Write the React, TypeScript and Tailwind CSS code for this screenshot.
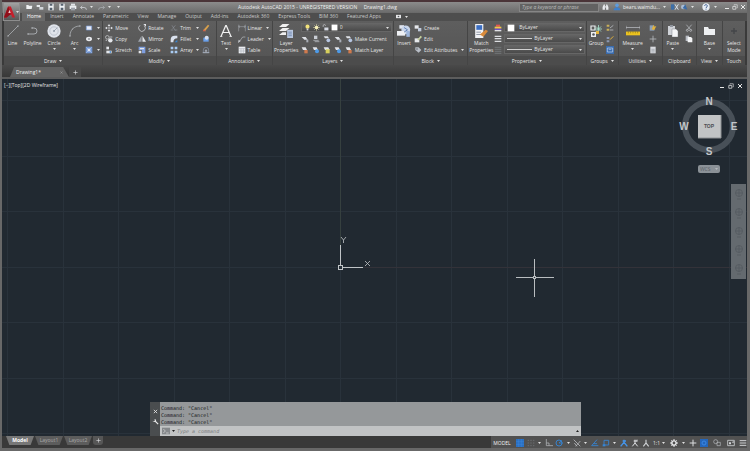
import type { ReactNode } from 'react';
import clsx from 'clsx';

interface IconProps {
  name: string;
  className?: string;
}

const white = '#e4e6ea';
const blue = '#3585d6';
const gold = '#e2b23c';

// All glyphs share a 12x12 box
const glyphs: Record<string, ReactNode> = {
  line: <path d="M1 11 11 1M0 11h2M10 1h2" stroke="#b9bdc2" strokeWidth=".7" />,
  polyline: <path d="M1 9h6a3 3 0 0 0 0-6H5M0 9h2M4 3h2" stroke="#b9bdc2" strokeWidth=".8" />,
  circle: (
    <>
      <circle cx="6" cy="6" r="5.7" fill="#dfe3ea" />
      <circle cx="6" cy="6" r="3.6" stroke="#a8afbb" strokeWidth=".5" />
      <circle cx="6" cy="6" r=".8" fill="#8d96a5" />
      <path d="m6 6 3-3" stroke="#8d96a5" strokeWidth=".6" />
    </>
  ),
  arc: <path d="M1 11C1 5 5 1 11 1M0 11h2M3 4h1M10 1h2" stroke="#b9bdc2" strokeWidth=".7" />,
  rect: <path d="M2 3h8v6H2z" fill="#e6ebf7" stroke="#7fa0dc" />,
  ellipse: (
    <>
      <ellipse cx="6" cy="6" rx="4.5" ry="3.2" fill="#e8eaee" />
      <circle cx="6" cy="6" r="1.2" fill="#5a5f68" />
    </>
  ),
  hatch: (
    <>
      <path d="M1 1h10v10H1z" fill="#6f93cf" />
      <path d="M2 2l8 8M10 2l-8 8" stroke="#c9d7f0" strokeWidth=".8" />
      <path d="M4 4h4v4H4z" fill="#dfe7f6" />
    </>
  ),
  move: (
    <>
      <path d="M6 2v8M2 6h8" stroke={white} strokeWidth=".7" />
      <path d="M6 0l2 3H4zM6 12l2-3H4zM0 6l3-2v4zM12 6 9 4v4z" fill={white} />
    </>
  ),
  rotate: (
    <>
      <path d="M9.5 2.5A5 5 0 1 1 3 2" stroke={white} strokeWidth="1" />
      <path d="M8 0h4v4z" fill={white} />
    </>
  ),
  trim: <path d="M1 9h4M7 9h4M3 2l5 8M8 2 4 7" stroke="#8e949c" strokeWidth=".9" />,
  copy: (
    <>
      <circle cx="3.5" cy="3.5" r="2.7" stroke={white} strokeWidth=".9" />
      <circle cx="8" cy="8" r="3.3" fill={white} />
      <path d="M7 3h4M1 8h2" stroke={white} />
    </>
  ),
  mirror: (
    <>
      <path d="M5.3 1v9H0z" fill="#9ea3ab" />
      <path d="M6.7 1v9H12z" fill={white} />
    </>
  ),
  fillet: (
    <>
      <path d="M1 11V7a6 6 0 0 1 6-6h4v4a6 6 0 0 0-6 6z" fill="#dbe2ee" />
      <path d="M7 11h4V7z" fill={blue} />
    </>
  ),
  stretch: (
    <>
      <path d="M2 1h4v4H2z" fill={white} />
      <path d="M2 7h8v4H2z" fill={white} />
      <path d="M7 8h2v2H7z" fill={blue} />
    </>
  ),
  scale: (
    <>
      <path d="M1 1h10v10H6V6H1z" fill="#7f9fe0" />
      <path d="M1 7h4v4H1zM3 3h6v2H3z" fill={white} />
    </>
  ),
  array: <path d="M1 1h4v4H1zM7 1h4v4H7zM1 7h4v4H1zM7 7h4v4H7z" fill="#a9cbf3" />,
  erase: (
    <>
      <path d="M2 9 9 1l2 1.5L5 10z" fill="#d8a14d" />
      <path d="M1 11h5L3 8z" fill="#d9664a" />
    </>
  ),
  explode: (
    <>
      <path d="M2 4h8v6H2z" fill="#6aa0ea" />
      <circle cx="7" cy="4" r="3" fill="#d6dff0" />
    </>
  ),
  offset: (
    <>
      <path d="M2 10V6a4 4 0 0 1 8 0v4z" stroke="#8794a8" />
      <path d="M1 10h10M5 9V6h2v3" stroke="#c1c9d6" />
    </>
  ),
  textA: (
    <>
      <path d="M1 11.5 5.7.7h.6L11 11.5M3 7.5h6" stroke="#f1f1f1" strokeWidth="1.2" />
      <path d="M0 11.5h2.4M9.4 11.5H12" stroke="#f1f1f1" strokeWidth=".7" />
    </>
  ),
  linear: <path d="M1 1v10M11 1v10M1 4h10M3 2.500 1 4l2 1.500M9 2.500 11 4 9 5.500" stroke="#a9adb3" strokeWidth=".8" />,
  leader: (
    <>
      <path d="M2 10 7 3h4" stroke="#c6c9ce" strokeWidth=".9" />
      <path d="M0 12l1-5 3 2z" fill="#c6c9ce" />
    </>
  ),
  table: (
    <>
      <path d="M1 1h10v10H1z" fill="#eceef2" />
      <path d="M1 4h10M1 7.500h10M4.500 4v7M8 4v7" stroke="#8f959f" strokeWidth=".6" />
    </>
  ),
  layers: (
    <>
      <path d="M3 0h6L6 2.500H0zM3 3.500h6L6 6H0zM3 7h3v2.500H0z" fill="#f0f0f0" />
      <path d="M7 5h5v7H7z" fill="#b8c6de" />
      <path d="M8 7h3M8 8.500h3M8 10h3" stroke="#4f6a97" strokeWidth=".5" />
    </>
  ),
  bulb: (
    <>
      <circle cx="6" cy="4.500" r="3.5" fill="#f2e27a" />
      <path d="M4.500 8h3v3h-3z" fill="#cfd3da" />
    </>
  ),
  sun: (
    <>
      <circle cx="6" cy="6" r="3" fill="#f6f0b8" />
      <path d="M6 0v12M0 6h12M2 2l8 8M10 2l-8 8" stroke="#f6f0b8" strokeWidth=".8" />
    </>
  ),
  lock: (
    <>
      <path d="M2 5V3a2 2 0 0 1 4 0" stroke={white} />
      <path d="M4 6h7v5H4z" fill="#d5d9e2" />
    </>
  ),
  swatch: <path d="M1 1h10v10H1z" fill="#fff" />,
  layA: (
    <>
      <path d="M1 3h6l3 4H5z" fill="#dfe2e7" />
      <path d="M8 7h3v4H8z" fill="#a9aeb7" />
    </>
  ),
  layB: (
    <>
      <path d="M3 1h5v5H3z" fill="#c9cdd4" />
      <path d="M2 8h8M4 10h7" stroke="#c9cdd4" />
    </>
  ),
  layC: (
    <>
      <path d="M1 2h6l2 3H3z" fill="#dfe2e7" />
      <circle cx="8" cy="8" r="2.800" fill="#b7c6e2" />
    </>
  ),
  layOrange: (
    <>
      <path d="M1 2h6l2 4H3z" fill="#e2e4e9" />
      <path d="M5 6h5v5H5z" fill="#cf7a4e" />
    </>
  ),
  layBlue: (
    <>
      <path d="M1 2h6l2 4H3z" fill="#e2e4e9" />
      <circle cx="7.500" cy="8" r="3" fill="#4e9ae6" />
    </>
  ),
  layYellow: (
    <>
      <path d="M1 2h7l2 4H3z" fill="#e2e4e9" />
      <path d="M4 5h6v6H4z" fill="#d6cf5c" />
    </>
  ),
  insert: (
    <>
      <path d="M2 1h4v3H2z" fill="#dfe4ee" />
      <circle cx="7.500" cy="5" r="3.800" fill="#c9d5ea" />
      <path d="M0 6h7v4H0z" fill="#eef0f4" />
      <path d="M8 6h3v5H8z" fill="#9eb6dc" />
      <path d="M6 3l3 2-3 2" stroke="#5f7fb4" strokeWidth=".8" />
    </>
  ),
  create: (
    <>
      <path d="M1 2h6v5H1z" fill="#e6e8ec" />
      <path d="M6 6h5v5H6z" fill="#c1cbdc" />
    </>
  ),
  edit: (
    <>
      <path d="M1 5h7v6H1z" fill="#e6e8ec" />
      <path d="m5 7 5-6 2 2-5 5z" fill="#c8d39c" />
    </>
  ),
  attrib: (
    <>
      <path d="M2 2h5l4 4-4 4-5-4z" fill="#b9bec7" />
      <circle cx="4.500" cy="4.500" r="1" fill="#50545b" />
    </>
  ),
  match: (
    <>
      <path d="M1 0h7v12H1z" fill="#f1f2f5" />
      <path d="M2 1h5v4H2z" fill="#3b6fc4" />
      <path d="M2 7h4M2 9h4" stroke="#7d8797" strokeWidth=".7" />
      <path d="m5 9 5-4 2 1-4 5z" fill="#d98b3b" />
    </>
  ),
  color: (
    <>
      <path d="M3 1h6v3H3z" fill="#e8564f" />
      <path d="M1 4h10v3H1z" fill="#f1c84c" />
      <path d="M1 7h10v2H1z" fill="#7452c8" />
      <path d="M1 9h10v2H1z" fill="#dfe0e4" />
    </>
  ),
  weight: <path d="M1 2h10M1 5.500h10M1 9.500h10" stroke="#dcdee2" strokeWidth="1.800" />,
  ltype: <path d="M1 2h10M1 5h10M1 8h10M1 11h10" stroke="#85898e" strokeWidth=".9" />,
  group: (
    <>
      <path d="M1 1h4v4H1z" stroke="#eceef1" strokeWidth="1.200" />
      <path d="M1 7h5v5H1z" fill="#eceef1" />
      <circle cx="3.500" cy="9.500" r="1.300" fill="#53565a" />
      <path d="M8.500 0v8M4.500 4h8M6 1.500l5 5M11 1.500l-5 5" stroke="#a9e4cf" strokeWidth=".8" />
      <path d="M6 6h3v3H6z" fill={gold} />
    </>
  ),
  ungroup: (
    <>
      <path d="M1 1h4v3H1zM1 7h4v3H1z" fill="#c9b05a" />
      <path d="M6 6l5-4M6 9h5" stroke="#cfd3d9" />
    </>
  ),
  groupEdit: (
    <>
      <path d="M1 3h4v3H1zM1 8h4v3H1z" fill="#8b96b0" />
      <path d="m6 7 5-5" stroke={gold} strokeWidth="1.500" />
    </>
  ),
  groupSel: (
    <>
      <path d="M0 0h12v12H0z" fill="#3a6cae" />
      <path d="M2 3h8v6H2z" stroke="#c4d8f5" />
      <path d="M4 5h4" stroke="#c4d8f5" />
    </>
  ),
  measure: (
    <>
      <path d="M0 3h12M0 1.500v3M12 1.500v3" stroke="#bfc2c7" strokeWidth=".6" />
      <path d="M0 6.500h12v3.200H0z" fill="#ecc31f" />
      <path d="M2 6.500V8M4 6.500V8M6 6.500V8M8 6.500V8M10 6.500V8" stroke="#6b5a12" strokeWidth=".4" />
    </>
  ),
  select: (
    <>
      <path d="M1 2h7v8H1z" fill="#8da1b8" />
      <path d="m4 8 3-7 1 3 3-1-3 6z" fill={gold} />
    </>
  ),
  point: <path d="M6 1v10M1 6h10" stroke="#b9bdc2" strokeWidth="1.200" />,
  calc: (
    <>
      <path d="M2 1h8v10H2z" fill="#d9dbe0" />
      <path d="M3.500 5h5M3.500 7h5M3.500 9h5" stroke="#80858e" strokeWidth=".7" />
    </>
  ),
  paste: (
    <>
      <path d="M1 1h7v9H1z" fill="#cfd2d7" />
      <path d="M3 0h3v2H3z" fill="#8f949c" />
      <path d="M5 4h4l2 2v6H5z" fill="#f4f5f7" stroke="#6a6e75" strokeWidth=".4" />
    </>
  ),
  cut: (
    <>
      <path d="m2 1 6 7M10 1 4 8" stroke="#cfd2d7" strokeWidth=".9" />
      <circle cx="3.500" cy="9.500" r="1.500" stroke="#cfd2d7" />
      <circle cx="8.500" cy="9.500" r="1.500" stroke="#cfd2d7" />
    </>
  ),
  pages: (
    <>
      <path d="M1 1h5v8H1z" fill="#b9bdc4" />
      <path d="M4 3h5l2 2v6H4z" fill="#f4f5f7" />
    </>
  ),
  base: <path d="M1 2h4l1 2h6v6H1z" fill="#eef0f2" />,
  touch: <path d="M6 3v6M3 6h6" stroke="#444649" strokeWidth="1.400" />,
  fileNew: <path d="M2 9V3h3l1 1h5l-1 5z" fill="#f0f1f3" />,
  open: (
    <>
      <path d="M1 3h5v3H1z" fill="#e8eaed" />
      <path d="M5 6h6v4H5z" fill="#d3d6db" />
    </>
  ),
  save: (
    <>
      <path d="M2 1h8v10H2z" fill="#eef0f3" />
      <path d="M4 1h4v3H4zM4 7h4v4H4z" fill="#55606e" />
    </>
  ),
  print: (
    <>
      <path d="M3 1h6v3H3z" fill="#e2e4e8" />
      <path d="M1 4h10v5H1z" fill="#eceef1" />
      <path d="M3 7h6v4H3z" fill="#9da2aa" />
    </>
  ),
  undo: <path d="M4 3 1 6l3 3M1 6h6q4 0 4 4" stroke="#d6d8dc" strokeWidth="1.300" />,
  redo: <path d="m8 3 3 3-3 3M11 6H5q-4 0-4 4" stroke="#b4b7bb" strokeWidth="1.100" />,
  binoculars: (
    <>
      <path d="M1 5 3 1h2v9H1zM11 5 9 1H7v9h4z" fill="#e9ebee" />
      <path d="M5 4h2v2H5z" fill="#e9ebee" />
    </>
  ),
  user: (
    <>
      <circle cx="6" cy="3.500" r="2.700" fill="#5c9be0" />
      <path d="M1 11c0-6 10-6 10 0z" fill="#3f7fcb" />
    </>
  ),
  exchange: (
    <>
      <path d="M0 2h5v8H0z" fill="#3d6ea8" />
      <path d="m6 2 5 8M11 2l-5 8" stroke="#d6e0ee" strokeWidth="1.500" />
    </>
  ),
  cloud: (
    <>
      <circle cx="5" cy="6" r="3.500" fill="#a9bcd6" />
      <path d="m4 8 4-6 3 8z" fill="#3a6aa6" />
    </>
  ),
  help: (
    <>
      <circle cx="6" cy="6" r="5.500" fill="#e8edf5" />
      <path d="M4 4.500c0-3 4-2.500 4 0C8 6 6 6 6 7.500M6 8.500V10" stroke="#2e4f86" strokeWidth="1.300" />
    </>
  ),
  min: <path d="M2 9h8" stroke="#e8e8e8" strokeWidth="2" />,
  restore: (
    <>
      <path d="M1.500 5h6v5.500h-6z" stroke="#e8e8e8" strokeWidth="1.400" />
      <path d="M4 3V1.500h6.500V8H9" stroke="#e8e8e8" strokeWidth="1.200" />
    </>
  ),
  close: <path d="m2 2 8 8M10 2l-8 8" stroke="#e8e8e8" strokeWidth="2" />,
  video: (
    <>
      <path d="M0 2h12v8H0z" fill="#e3e4e6" />
      <circle cx="6" cy="6" r="2" fill="#55585c" />
    </>
  ),
  wrench: (
    <>
      <path d="m5 5 5.500 5.500" stroke="#e8e8e8" strokeWidth="2.200" />
      <path d="M5.500 1.500 4 3l1 1.500L3 6 1 4.500A3 3 0 0 0 6 6a3 3 0 0 0-.5-4.500z" fill="#e8e8e8" />
    </>
  ),
  prompt: (
    <>
      <path d="M0 1h12v10H0z" fill="#85888b" />
      <path d="m2 3 3 3-3 3M6 9h4" stroke="#dcdcdc" />
    </>
  ),
  gridOn: (
    <>
      <path d="M0 0h12v12H0z" fill="#2a70c2" />
      <path d="M0 4h12M0 8h12M4 0v12M8 0v12" stroke="#3f8be0" strokeWidth=".6" />
    </>
  ),
  snap: <path d="M1 2h2M5 2h2M9 2h2M1 6h2M5 6h2M9 6h2M1 10h2M5 10h2M9 10h2" stroke="#6c6f72" strokeWidth="1.500" />,
  ortho: <path d="M2 0v10h10M2 6h4v4" stroke="#b5b8bc" strokeWidth="1.100" />,
  polar: (
    <>
      <circle cx="6" cy="6" r="4.500" stroke={blue} strokeWidth="1.400" />
      <path d="M6 6h6M6 6l4-4" stroke={blue} strokeWidth="1.200" />
    </>
  ),
  iso: <path d="M1 1l10 10M4 11l7-8M2 6l4 5" stroke="#c3c6ca" strokeWidth="1.100" />,
  track: <path d="M1 10 9 1M1 10h10M4 7h5" stroke={blue} strokeWidth="1.300" />,
  osnap: (
    <>
      <path d="M3 2h7v7H3z" stroke={blue} strokeWidth="1.300" />
      <path d="M1 8h4v3H1z" fill={blue} />
    </>
  ),
  annoBlue: <path d="m1 11 5-6 5 6M6 5V1M4 3h5" stroke="#4596ec" strokeWidth="2" />,
  anno: <path d="m2 11 4-5 4 5M6 6V1M4 3h5M9 1v3" stroke="#e0e2e5" strokeWidth="1.500" />,
  annoScale: <path d="m2 11 4-5 4 5M6 6V1" stroke="#d0d3d6" strokeWidth="1.700" />,
  gear: (
    <>
      <circle cx="6" cy="6" r="3.200" stroke="#e6e7e9" strokeWidth="2.200" />
      <path d="M6 0v3M6 9v3M0 6h3M9 6h3M2 2l2 2M8 8l2 2M10 2 8 4M4 8l-2 2" stroke="#e6e7e9" strokeWidth="1.500" />
    </>
  ),
  plus: <path d="M6 1v10M1 6h10" stroke="#dcdee0" strokeWidth="1.500" />,
  hardware: (
    <>
      <path d="M0 0h12v12H0z" fill="#2466bb" />
      <circle cx="6" cy="6" r="3" stroke="#3b88e4" strokeWidth="1.500" />
    </>
  ),
  isolate: (
    <>
      <circle cx="4" cy="4" r="3" stroke="#b8bbbf" />
      <path d="M6 5h5v5H6z" stroke="#b8bbbf" />
    </>
  ),
  clean: (
    <>
      <path d="M1 2h10v8H1z" stroke="#d2d4d7" strokeWidth="1.200" />
      <path d="M3 8V5h3v3zM7 5l3-2v3z" fill="#d2d4d7" />
    </>
  ),
  menu: <path d="M1 2.500h10M1 6h10M1 9.500h10" stroke="#dcdee0" strokeWidth="1.400" />,
};

function Icon({ name, className = 'size-[8px]' }: IconProps) {
  return (
    <svg viewBox="0 0 12 12" fill="none" className={clsx('shrink-0', className)} aria-hidden="true">
      {glyphs[name]}
    </svg>
  );
}

function Caret({ className }: { className?: string }) {
  return (
    <svg viewBox="0 0 6 4" className={clsx('h-[2px] w-[3px] shrink-0', className)} aria-hidden="true">
      <path d="M0 0h6L3 4z" fill="#e0e0e0" />
    </svg>
  );
}

interface ToolProps {
  icon: string;
  label?: string;
  caret?: boolean;
  title?: string;
  className?: string;
}

function Tool({ icon, label, caret, title, className }: ToolProps) {
  return (
    <button aria-label={label ?? title ?? icon} className={clsx('flex h-[11px] items-center gap-[2px]', className)}>
      <Icon name={icon} />
      {label && <span>{label}</span>}
      {caret && <Caret className="ml-[2px]" />}
    </button>
  );
}

interface BigToolProps {
  icon: string;
  lines: string[];
  caret?: boolean;
  className?: string;
  iconClass?: string;
}

function BigTool({ icon, lines, caret, className, iconClass = 'size-[12px]' }: BigToolProps) {
  return (
    <button className={clsx('flex flex-col items-center', className)}>
      <span className="flex h-[18px] items-center">
        <Icon name={icon} className={iconClass} />
      </span>
      {lines.map((line) => (
        <span key={line} className="leading-[7px]">{line}</span>
      ))}
      {caret && <Caret className="mt-px" />}
    </button>
  );
}

interface PanelProps {
  title: string;
  caret?: boolean;
  last?: boolean;
  children: ReactNode;
}

function Panel({ title, caret = true, last, children }: PanelProps) {
  return (
    <section className={clsx('flex min-w-0 flex-col', !last && 'border-r border-[#454545]')}>
      <div className="flex h-[35px] items-start pt-px">{children}</div>
      <button className="flex h-[9px] items-center justify-center gap-[3px] bg-[#4c4c4c]">
        {title}
        {caret && <Caret />}
      </button>
    </section>
  );
}

interface PickProps {
  label: string;
  value: string;
  lead: ReactNode;
}

function Pick({ label, value, lead }: PickProps) {
  return (
    <div className="flex h-[9px] items-center gap-[2px] border border-[#666666] bg-linear-to-b from-[#646464] to-[#4a4a4a] px-[2px]">
      {lead}
      <select aria-label={label} className="h-[7px] min-w-0 flex-1 appearance-none bg-transparent text-[5px] leading-[7px] outline-none">
        <option>{value}</option>
      </select>
      <Caret />
    </div>
  );
}

const tabs = ['Home', 'Insert', 'Annotate', 'Parametric', 'View', 'Manage', 'Output', 'Add-ins', 'Autodesk 360', 'Express Tools', 'BIM 360', 'Featured Apps'];

function TitleBar() {
  return (
    <header className="flex h-[10px] items-center text-[#f0f0f0]">
      <div className="flex items-center gap-[3px] pl-[5px]">
        {['fileNew', 'open', 'save', 'save', 'print'].map((name, i) => (
          <button key={i} aria-label={name}>
            <Icon name={name} />
          </button>
        ))}
        <button aria-label="Undo" className="flex items-center gap-[3px]">
          <Icon name="undo" className="size-[7px]" />
          <Caret />
        </button>
        <button aria-label="Redo" className="ml-[2px] flex items-center gap-[3px]">
          <Icon name="redo" className="size-[7px]" />
          <Caret />
        </button>
        <Caret className="ml-[3px]" />
      </div>
      <h1 className="min-w-0 flex-1 pr-[4px] text-center whitespace-pre">Autodesk AutoCAD 2015 - UNREGISTERED VERSION     Drawing1.dwg</h1>
      <input
        aria-label="Search"
        placeholder="Type a keyword or phrase"
        className="h-[9px] w-[80px] border border-[#868686] bg-[#626262] px-[2px] text-[5px] leading-[7px] italic outline-none placeholder:text-[#bdbdbd]"
      />
      <div className="ml-[3px] flex items-center">
        <button aria-label="Find"><Icon name="binoculars" className="size-[7px]" /></button>
        <button className="ml-[4px] flex items-center gap-[2px]">
          <Icon name="user" />
          bears.waimdu...
          <Caret className="ml-px" />
        </button>
        <button aria-label="Exchange" className="ml-[5px]"><Icon name="exchange" /></button>
        <button aria-label="Autodesk 360" className="ml-px flex items-center gap-[3px]">
          <Icon name="cloud" />
          <Caret />
        </button>
        <button aria-label="Help" className="ml-[8px] flex items-center gap-[4px]">
          <Icon name="help" />
          <Caret />
        </button>
      </div>
      <div className="ml-[7px] flex items-center gap-[2px] pr-px">
        <button aria-label="Minimize"><Icon name="min" className="size-[6px]" /></button>
        <button aria-label="Restore"><Icon name="restore" className="size-[6px]" /></button>
        <button aria-label="Close"><Icon name="close" className="size-[6px]" /></button>
      </div>
    </header>
  );
}

function Ribbon() {
  return (
    <div className="mx-[2px] grid grid-cols-[99fr_113fr_56fr_121fr_74fr_118fr_32fr_44fr_34fr_26fr_22fr] bg-linear-to-b from-[#5e5e5e] to-[#545454]">
      <Panel title="Draw">
        <BigTool icon="line" lines={['Line']} className="w-[17px]" />
        <BigTool icon="polyline" lines={['Polyline']} className="w-[23px]" />
        <BigTool icon="circle" lines={['Circle']} caret className="w-[20px]" iconClass="size-[14px]" />
        <BigTool icon="arc" lines={['Arc']} caret className="w-[21px]" />
        <div>
          <Tool icon="rect" caret />
          <Tool icon="ellipse" caret />
          <Tool icon="hatch" caret />
        </div>
      </Panel>
      <Panel title="Modify">
        <div className="w-[33px] pl-[2px]">
          <Tool icon="move" label="Move" />
          <Tool icon="copy" label="Copy" />
          <Tool icon="stretch" label="Stretch" />
        </div>
        <div className="w-[32px] pl-[2px]">
          <Tool icon="rotate" label="Rotate" />
          <Tool icon="mirror" label="Mirror" />
          <Tool icon="scale" label="Scale" />
        </div>
        <div className="w-[25px] pl-[2px]">
          <Tool icon="trim" label="Trim" />
          <Tool icon="fillet" label="Fillet" />
          <Tool icon="array" label="Array" />
        </div>
        <div className="flex w-[8px] flex-col items-center">
          {['Trim options', 'Fillet options', 'Array options'].map((name) => (
            <button key={name} aria-label={name} className="flex h-[11px] items-center">
              <Caret />
            </button>
          ))}
        </div>
        <div className="pl-px">
          <Tool icon="erase" />
          <Tool icon="explode" />
          <Tool icon="offset" />
        </div>
      </Panel>
      <Panel title="Annotation">
        <BigTool icon="textA" lines={['Text']} caret className="w-[19px]" />
        <div className="pl-[2px]">
          <Tool icon="linear" label="Linear" caret />
          <Tool icon="leader" label="Leader" caret />
          <Tool icon="table" label="Table" />
        </div>
      </Panel>
      <Panel title="Layers">
        <BigTool icon="layers" lines={['Layer', 'Properties']} className="w-[27px]" iconClass="size-[14px]" />
        <div className="min-w-0 flex-1 pr-px pl-px">
          <div className="h-[11px] pt-px">
            <Pick
              label="Layer"
              value="0"
              lead={['bulb', 'sun', 'lock', 'swatch'].map((name) => (
                <Icon key={name} name={name} className="size-[7px]" />
              ))}
            />
          </div>
          <div className="flex gap-[3px]">
            <Tool icon="layA" />
            <Tool icon="layB" />
            <Tool icon="layC" />
            <Tool icon="layA" />
            <Tool icon="layC" label="Make Current" />
          </div>
          <div className="flex gap-[3px]">
            <Tool icon="layOrange" />
            <Tool icon="layBlue" />
            <Tool icon="layYellow" />
            <Tool icon="layBlue" />
            <Tool icon="layOrange" label="Match Layer" />
          </div>
        </div>
      </Panel>
      <Panel title="Block">
        <BigTool icon="insert" lines={['Insert']} className="w-[20px]" iconClass="size-[14px]" />
        <div>
          <Tool icon="create" label="Create" />
          <Tool icon="edit" label="Edit" />
          <Tool icon="attrib" label="Edit Attributes" caret />
        </div>
      </Panel>
      <Panel title="Properties">
        <BigTool icon="match" lines={['Match', 'Properties']} className="w-[26px]" iconClass="size-[14px]" />
        <div className="pr-[2px]">
          <Tool icon="color" title="Object color" />
          <Tool icon="weight" title="Lineweight" />
          <Tool icon="ltype" title="Linetype" />
        </div>
        <div className="flex min-w-0 flex-1 flex-col gap-[2px] pt-px pr-px">
          <Pick label="Color" value="ByLayer" lead={<Icon name="swatch" className="mr-[2px] size-[8px]" />} />
          <Pick label="Lineweight" value="ByLayer" lead={<span className="h-px w-[25px] bg-[#d0d0d0]" />} />
          <Pick label="Linetype" value="ByLayer" lead={<span className="h-px w-[25px] bg-[#d0d0d0]" />} />
        </div>
      </Panel>
      <Panel title="Groups">
        <BigTool icon="group" lines={['Group']} className="w-[19px]" />
        <div>
          <Tool icon="ungroup" title="Ungroup" />
          <Tool icon="groupEdit" title="Group edit" />
          <Tool icon="groupSel" title="Group selection" />
        </div>
      </Panel>
      <Panel title="Utilities">
        <BigTool icon="measure" lines={['Measure']} caret className="w-[28px]" iconClass="size-[14px]" />
        <div className="pl-[2px]">
          <Tool icon="select" title="Quick select" />
          <Tool icon="point" title="Point style" />
          <Tool icon="calc" title="Calculator" />
        </div>
      </Panel>
      <Panel title="Clipboard" caret={false}>
        <BigTool icon="paste" lines={['Paste']} caret className="w-[20px]" />
        <div className="pl-[2px]">
          <Tool icon="cut" title="Cut" />
          <Tool icon="pages" title="Copy clip" />
        </div>
      </Panel>
      <Panel title="View">
        <BigTool icon="base" lines={['Base']} caret className="w-full" />
      </Panel>
      <Panel title="Touch" caret={false} last>
        <BigTool icon="touch" lines={['Select', 'Mode']} className="w-full" />
      </Panel>
    </div>
  );
}

function ViewCube() {
  return (
    <div className="absolute top-[16px] right-[7px] flex flex-col items-center">
      <svg viewBox="0 0 62 62" className="size-[62px] font-['Liberation_Sans',sans-serif] font-bold" role="img" aria-label="View cube">
        <circle cx="31" cy="31" r="24" fill="none" stroke="#485058" strokeWidth="6" />
        <path d="M20 20h23v23H20z" fill="#c2c4c5" />
        <path d="M20 43h23V20" fill="none" stroke="#8f9294" />
        <g textAnchor="middle" fill="#c3c7ca" fontSize="10">
          <text x="31" y="10">N</text>
          <text x="31" y="60">S</text>
          <text x="6" y="35">W</text>
          <text x="56" y="35">E</text>
        </g>
        <text x="31" y="33" textAnchor="middle" fontSize="5" fill="#4c4f52">TOP</text>
      </svg>
      <button className="mt-[8px] flex h-[8px] w-[22px] items-center justify-between rounded-[2px] bg-[#8b9197] px-[2px] text-[#5b6167]">
        WCS
        <Caret className="opacity-50" />
      </button>
    </div>
  );
}

function NavBar() {
  return (
    <nav aria-label="Navigation" className="absolute top-[105px] right-px flex h-[95px] w-[15px] flex-col items-center justify-between bg-[#646a6f] py-[4px]">
      {[0, 1, 2, 3, 4].map((i) => (
        <button key={i} aria-label={`Navigate ${i + 1}`}>
          <svg viewBox="0 0 10 12" className="h-[12px] w-[10px]" fill="none" stroke="#575d62" aria-hidden="true">
            <circle cx="5" cy="5" r="3.500" />
            <path d="M5 1v8M1 5h8M3 11h4" />
          </svg>
        </button>
      ))}
    </nav>
  );
}

function CommandLine() {
  return (
    <div className="absolute bottom-0 left-[148px] flex w-[431px]">
      <div className="flex w-[10px] flex-col items-center gap-[4px] bg-[#4a4d4f] pt-[7px]">
        <button aria-label="Close command line"><Icon name="close" className="size-[5px]" /></button>
        <button aria-label="Customize"><Icon name="wrench" className="size-[7px]" /></button>
      </div>
      <div className="min-w-0 flex-1 font-['DejaVu_Sans_Mono',monospace]">
        <div className="h-[24px] bg-[#95989a] pt-[3px] pl-px leading-[7px] text-[#15181a]">
          {[0, 1, 2].map((i) => (
            <p key={i}>Command: "Cancel"</p>
          ))}
        </div>
        <div className="flex h-[10px] items-center gap-[2px] bg-[#c1c3c4] px-[2px]">
          <Icon name="prompt" className="size-[8px]" />
          <Caret className="invert" />
          <input
            aria-label="Command"
            placeholder="Type a command"
            className="h-[8px] min-w-0 flex-1 bg-transparent text-[5px] leading-[8px] italic outline-none placeholder:text-[#7c7f81]"
          />
          <Caret className="rotate-180 invert" />
        </div>
      </div>
    </div>
  );
}

function Canvas() {
  return (
    <main className="relative min-h-[300px] flex-1 overflow-hidden bg-[#212931]">
      <svg className="absolute inset-0 size-full" role="img" aria-label="Model space">
        <defs>
          <pattern id="grid" width="111" height="111" patternUnits="userSpaceOnUse">
            <path d="M5 0h1v111H5zM61 0h1v111h-1zM0 21h111v1H0zM0 77h111v1H0z" fill="#29323b" />
          </pattern>
        </defs>
        <rect width="100%" height="100%" fill="url(#grid)" />
        <path d="M338 0h1v166h-1z" fill="#36403f" />
        <path d="M362 188h390v1H362z" fill="#333239" />
        <g fill="none" stroke="#c0c4c7" shapeRendering="crispEdges">
          <path d="M338.500 166v20M340 188.500h21" />
          <path d="M336.500 186.500h4v4h-4z" />
        </g>
        <g fill="none" stroke="#c0c4c7" strokeWidth=".8">
          <path d="m339 158 2.500 3 2.500-3M341.500 161v3M363 182l5 5M368 182l-5 5" />
        </g>
        <g fill="none" stroke="#b9bdc0" shapeRendering="crispEdges">
          <path d="M514 198.500h17M534 198.500h18M532.500 180v17M532.500 200v18" />
          <path d="M531.500 197.500h2v2h-2z" />
        </g>
      </svg>
      <p className="absolute top-[3px] left-[2px] leading-[7px]">[−][Top][2D Wireframe]</p>
      <div className="absolute top-[4px] right-[4px] flex gap-[3px]">
        <button aria-label="Minimize drawing"><Icon name="min" className="size-[6px]" /></button>
        <button aria-label="Restore drawing"><Icon name="restore" className="size-[6px]" /></button>
        <button aria-label="Close drawing"><Icon name="close" className="size-[6px]" /></button>
      </div>
      <ViewCube />
      <NavBar />
      <CommandLine />
    </main>
  );
}

function LayoutTab({ label, active }: { label: string; active?: boolean }) {
  return (
    <button
      className={clsx(
        'h-[9px] w-[28px] text-center leading-[9px] [clip-path:polygon(0_0,100%_0,88%_100%,12%_100%)]',
        active ? 'bg-[#777777] font-bold text-white' : 'bg-[#5c5c5c] text-[#a9a9a9]',
      )}
    >
      {label}
    </button>
  );
}

// icon plus the width of its slot; an empty name is a menu arrow
const statusItems: [string, string][] = [
  ['gridOn', 'w-[13px]'],
  ['snap', 'w-[10px]'],
  ['', 'w-[7px]'],
  ['ortho', 'w-[11px]'],
  ['polar', 'w-[10px]'],
  ['', 'w-[8px]'],
  ['iso', 'w-[10px]'],
  ['', 'w-[7px]'],
  ['track', 'w-[11px]'],
  ['osnap', 'w-[11px]'],
  ['', 'w-[7px]'],
  ['annoBlue', 'w-[11px]'],
  ['anno', 'w-[11px]'],
  ['annoScale', 'w-[11px]'],
];

const statusItemsEnd: [string, string][] = [
  ['gear', 'w-[13px]'],
  ['', 'w-[7px]'],
  ['plus', 'w-[11px]'],
  ['hardware', 'w-[12px]'],
  ['isolate', 'w-[14px]'],
  ['clean', 'w-[14px]'],
  ['menu', 'w-[9px]'],
];

function StatusItem({ item }: { item: [string, string] }) {
  const [name, width] = item;
  return (
    <button aria-label={name || 'Options'} className={clsx('flex justify-center', width)}>
      {name ? <Icon name={name} /> : <Caret />}
    </button>
  );
}

function StatusBar() {
  return (
    <footer className="flex h-[12px] items-stretch bg-[#393939]">
      <div className="flex flex-1 gap-px pl-[4px]">
        <LayoutTab label="Model" active />
        <LayoutTab label="Layout1" />
        <LayoutTab label="Layout2" />
        <button aria-label="New layout" className="flex h-[9px] w-[10px] items-center justify-center rounded-b-[3px] bg-[#565656]">
          <Icon name="plus" className="size-[5px]" />
        </button>
      </div>
      <div className="flex items-center bg-[#515151] pt-px">
        <button className="w-[22px] text-center text-[#f0f0f0]">MODEL</button>
        {statusItems.map((item, i) => (
          <StatusItem key={i} item={item} />
        ))}
        <button className="flex w-[16px] items-center justify-center gap-[2px]">
          1:1
          <Caret />
        </button>
        {statusItemsEnd.map((item, i) => (
          <StatusItem key={i} item={item} />
        ))}
      </div>
    </footer>
  );
}

export default function App() {
  return (
    <div className="flex min-h-screen flex-col border-r-3 border-b-3 border-l-2 border-[#686868] bg-[#3a3a3a] font-['Open_Sans',sans-serif] text-[5px] leading-[8px] whitespace-nowrap text-[#e6e6e6]">
      <div className="h-[2px] bg-[#4a3438]" />
      <div className="flex bg-linear-to-b from-[#8b8b8b] via-[#6c6c6c] via-55% to-[#4e4e4e] to-60%">
        <button aria-label="Application menu" className="ml-px flex h-[19px] w-[17px] items-center justify-center gap-px border border-[#8d8d8d] bg-linear-to-b from-[#a2a2a2] to-[#565656]">
          <svg viewBox="0 0 12 14" className="h-[14px] w-[11px]" aria-hidden="true">
            <path d="M4.500 1h3L12 13H9L7.800 10H4L3 13H0z" fill="#c61f2b" />
            <path d="M4.500 1 6 4.500 4.500 8 8 9 3 13H0z" fill="#8f101b" />
            <path d="M6 4.500 7.300 8H4.800z" fill="#e9c8cb" />
          </svg>
          <Caret />
        </button>
        <div className="min-w-0 flex-1">
          <TitleBar />
          <nav aria-label="Ribbon tabs" className="flex h-[9px] pl-[2px] leading-[9px] text-[#cccccc]">
            {tabs.map((tab, i) => (
              <button key={tab} className={clsx('pr-[4px] pl-[5px]', i === 0 && 'bg-[#6a6a6a] text-white')}>
                {tab}
              </button>
            ))}
            <button aria-label="Minimize ribbon" className="ml-[10px] flex items-center gap-[3px]">
              <Icon name="video" className="h-[5px] w-[7px]" />
              <Caret />
            </button>
          </nav>
        </div>
      </div>
      <Ribbon />
      <div className="flex h-[14px] items-end border-b-2 border-[#5c5c5c] bg-linear-to-b from-[#4a4a4a] to-[#383838] pl-[8px]">
        <button className="flex h-[10px] w-[59px] items-center justify-between bg-[#626262] px-[6px] text-[#f0f0f0] [clip-path:polygon(7%_0,90%_0,100%_100%,0_100%)]">
          Drawing1*
          <Icon name="close" className="size-[3px] opacity-50" />
        </button>
        <button aria-label="New drawing" className="flex h-[10px] w-[12px] items-center justify-center bg-[#484848]">
          <Icon name="plus" className="size-[5px]" />
        </button>
      </div>
      <Canvas />
      <StatusBar />
    </div>
  );
}
